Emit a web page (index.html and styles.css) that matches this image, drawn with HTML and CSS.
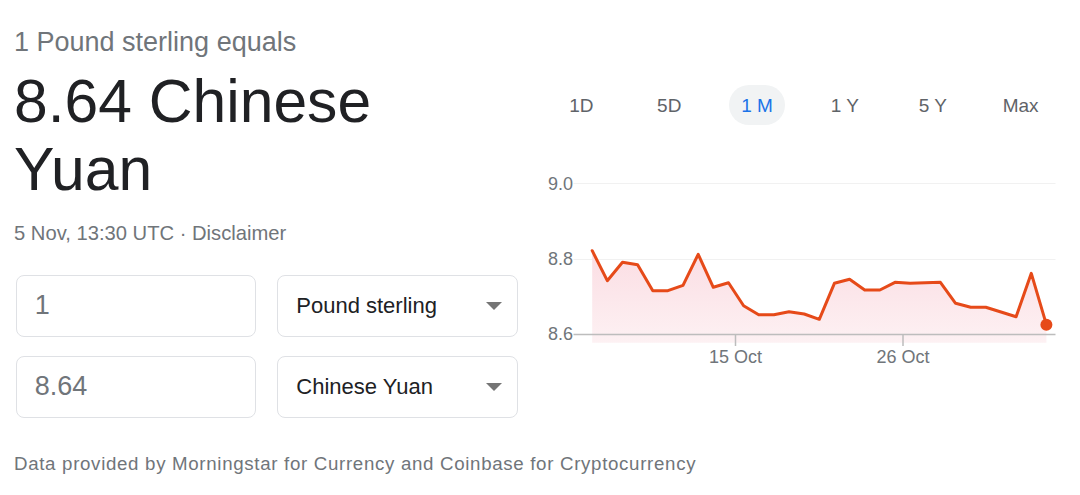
FILE: index.html
```html
<!DOCTYPE html>
<html>
<head>
<meta charset="utf-8">
<link rel="stylesheet" href="styles.css">
</head>
<body>
<div class="page">
  <div class="main">
    <div class="left">
      <div class="equals">1 Pound sterling equals</div>
      <div class="big">8.64 Chinese Yuan</div>
      <div class="date">5 Nov, 13:30 UTC · <span class="disc">Disclaimer</span></div>
      <div class="converter">
        <div class="box input">1</div>
        <div class="box select"><span>Pound sterling</span><svg class="arrow" width="16" height="8" viewBox="0 0 16 8"><polygon points="0,0 16,0 8,8" fill="#757575"/></svg></div>
        <div class="box input">8.64</div>
        <div class="box select"><span>Chinese Yuan</span><svg class="arrow" width="16" height="8" viewBox="0 0 16 8"><polygon points="0,0 16,0 8,8" fill="#757575"/></svg></div>
      </div>
    </div>
    <div class="right">
      <div class="tabs">
        <div class="tab"><span>1D</span></div>
        <div class="tab"><span>5D</span></div>
        <div class="tab"><span class="active">1 M</span></div>
        <div class="tab"><span>1 Y</span></div>
        <div class="tab"><span>5 Y</span></div>
        <div class="tab"><span>Max</span></div>
      </div>
      <svg class="chart" width="527" height="215" viewBox="537.5 160 527 215">
        <defs>
          <linearGradient id="fillg" x1="0" y1="0" x2="0" y2="1">
            <stop offset="0" stop-color="#fbdde3"/>
            <stop offset="1" stop-color="#fdf1f3"/>
          </linearGradient>
        </defs>
        <line x1="573" y1="183.5" x2="1055" y2="183.5" stroke="#f1f1f1" stroke-width="1"/>
        <line x1="573" y1="259.5" x2="1055" y2="259.5" stroke="#f1f1f1" stroke-width="1"/>
        <path d="M591.7,250.7 L606.8,280.7 L622,262.3 L637.1,264.7 L652.3,290.7 L667.4,290.7 L682.5,285.3 L697.7,254.3 L712.8,287.3 L728,282.7 L743.1,305.7 L758.2,314.7 L773.4,314.7 L788.5,311.7 L803.7,314 L818.8,319.3 L833.9,283.3 L849.1,279.3 L864.2,290 L879.4,290 L894.5,282.3 L909.6,283.3 L924.8,282.7 L939.9,282.3 L955.1,303.3 L970.2,307.3 L985.3,307.3 L1000.5,312 L1015.6,316.7 L1030.8,273.3 L1045.9,324.7 L1045.9,342.7 L591.7,342.7 Z" fill="url(#fillg)"/>
        <line x1="573" y1="334.5" x2="1055" y2="334.5" stroke="#bdbdbd" stroke-width="1.5"/>
        <line x1="735" y1="334" x2="735" y2="346" stroke="#bdbdbd" stroke-width="1.5"/>
        <line x1="902.5" y1="334" x2="902.5" y2="346" stroke="#bdbdbd" stroke-width="1.5"/>
        <polyline points="591.7,250.7 606.8,280.7 622,262.3 637.1,264.7 652.3,290.7 667.4,290.7 682.5,285.3 697.7,254.3 712.8,287.3 728,282.7 743.1,305.7 758.2,314.7 773.4,314.7 788.5,311.7 803.7,314 818.8,319.3 833.9,283.3 849.1,279.3 864.2,290 879.4,290 894.5,282.3 909.6,283.3 924.8,282.7 939.9,282.3 955.1,303.3 970.2,307.3 985.3,307.3 1000.5,312 1015.6,316.7 1030.8,273.3 1045.9,324.7" fill="none" stroke="#e64a19" stroke-width="3" stroke-linejoin="round" stroke-linecap="round"/>
        <circle cx="1045.9" cy="324.7" r="6" fill="#e64a19"/>
        <text class="axis" x="572.5" y="189.5" text-anchor="end">9.0</text>
        <text class="axis" x="572.5" y="265" text-anchor="end">8.8</text>
        <text class="axis" x="572.5" y="340.3" text-anchor="end">8.6</text>
        <text class="axis" x="735" y="363.3" text-anchor="middle">15 Oct</text>
        <text class="axis" x="902.5" y="363.3" text-anchor="middle">26 Oct</text>
      </svg>
    </div>
  </div>
  <div class="footer">Data provided by Morningstar for Currency and Coinbase for Cryptocurrency</div>
</div>
</body>
</html>
```
FILE: styles.css
```css
* { box-sizing: border-box; }
html, body {
  margin: 0;
  padding: 0;
  background: #ffffff;
}
body {
  font-family: "Liberation Sans", Arial, sans-serif;
  color: #202124;
  width: 1080px;
  height: 495px;
  overflow: hidden;
}
.page {
  padding-left: 14px;
}
.main {
  display: flex;
  align-items: flex-start;
}
.left {
  flex: none;
  width: 523.5px;
  padding-top: 25.7px;
}
.equals {
  font-size: 27px;
  line-height: 32px;
  color: #70757a;
  white-space: nowrap;
}
.big {
  margin-top: 9.2px;
  font-size: 60.6px;
  line-height: 68px;
  color: #202124;
  max-width: 480px;
}
.date {
  margin-top: 18px;
  font-size: 20.2px;
  line-height: 24px;
  color: #70757a;
}
.converter {
  margin-top: 30px;
  margin-left: 1.7px;
  display: grid;
  grid-template-columns: 240px 241px;
  column-gap: 21.6px;
  row-gap: 19px;
}
.box {
  height: 62px;
  border: 1px solid #dfe1e5;
  border-radius: 8px;
  display: flex;
  align-items: center;
  padding-left: 18px;
}
.input {
  font-size: 27px;
  color: #70757a;
}
.select {
  font-size: 22px;
  color: #202124;
  justify-content: space-between;
  padding-right: 15px;
}
.arrow {
  display: block;
}
.right {
  flex: none;
  width: 527px;
  margin-top: 85px;
}
.tabs {
  display: grid;
  grid-template-columns: repeat(6, 1fr);
  height: 40px;
}
.tab {
  display: flex;
  align-items: center;
  justify-content: center;
  font-size: 19px;
  color: #5f6368;
}
.tab span {
  display: flex;
  align-items: center;
  height: 40px;
  padding: 1px 0 0 0;
}
.tab .active {
  padding: 1px 12.5px 0 12.5px;
  border-radius: 20px;
  background: #f1f3f4;
  color: #1a73e8;
}
.chart {
  display: block;
  margin-top: 35px;
}
.axis {
  font-family: "Liberation Sans", Arial, sans-serif;
  font-size: 18px;
  fill: #70757a;
}
.footer {
  margin-top: 35.5px;
  font-size: 18.7px;
  letter-spacing: 0.68px;
  line-height: 22px;
  color: #70757a;
  white-space: nowrap;
}
```
